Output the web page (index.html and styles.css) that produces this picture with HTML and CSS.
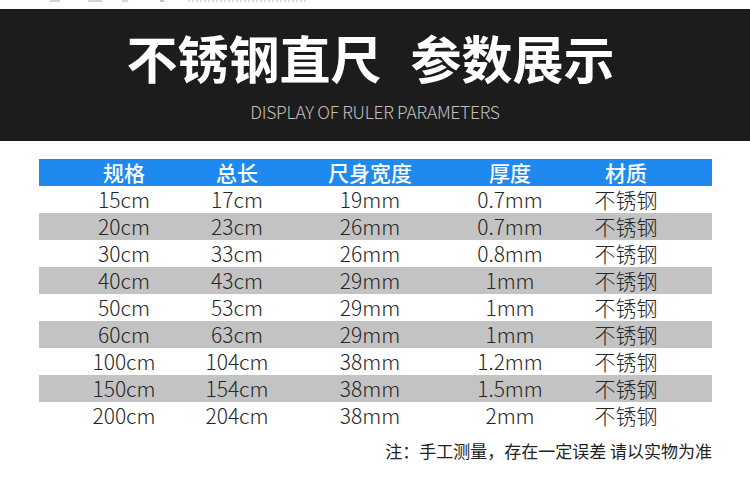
FILE: index.html
```html
<!DOCTYPE html>
<html lang="zh">
<head>
<meta charset="utf-8">
<title>不锈钢直尺 参数展示</title>
<link rel="stylesheet" href="styles.css">
</head>
<body>
<div class="page">
  <div class="topstrip">
    <span class="mark m1"></span><span class="mark m2"></span><span class="mark m3 red"></span><span class="mark m4"></span><span class="mark m5 dots"></span>
  </div>
  <header class="banner">
    <h1 class="title"><span>不锈钢直尺</span><span>参数展示</span></h1>
    <p class="subtitle">DISPLAY OF RULER PARAMETERS</p>
  </header>
  <section class="table">
    <div class="row head"><span class="c">规格</span><span class="c">总长</span><span class="c">尺身宽度</span><span class="c">厚度</span><span class="c">材质</span></div>
    <div class="row"><span class="c">15cm</span><span class="c">17cm</span><span class="c">19mm</span><span class="c">0.7mm</span><span class="c">不锈钢</span></div>
    <div class="row alt"><span class="c">20cm</span><span class="c">23cm</span><span class="c">26mm</span><span class="c">0.7mm</span><span class="c">不锈钢</span></div>
    <div class="row"><span class="c">30cm</span><span class="c">33cm</span><span class="c">26mm</span><span class="c">0.8mm</span><span class="c">不锈钢</span></div>
    <div class="row alt"><span class="c">40cm</span><span class="c">43cm</span><span class="c">29mm</span><span class="c">1mm</span><span class="c">不锈钢</span></div>
    <div class="row"><span class="c">50cm</span><span class="c">53cm</span><span class="c">29mm</span><span class="c">1mm</span><span class="c">不锈钢</span></div>
    <div class="row alt"><span class="c">60cm</span><span class="c">63cm</span><span class="c">29mm</span><span class="c">1mm</span><span class="c">不锈钢</span></div>
    <div class="row"><span class="c">100cm</span><span class="c">104cm</span><span class="c">38mm</span><span class="c">1.2mm</span><span class="c">不锈钢</span></div>
    <div class="row alt"><span class="c">150cm</span><span class="c">154cm</span><span class="c">38mm</span><span class="c">1.5mm</span><span class="c">不锈钢</span></div>
    <div class="row"><span class="c">200cm</span><span class="c">204cm</span><span class="c">38mm</span><span class="c">2mm</span><span class="c">不锈钢</span></div>
  </section>
  <p class="note">注：手工测量，存在一定误差 请以实物为准</p>
</div>
</body>
</html>
```
FILE: styles.css
```css
* { box-sizing: border-box; }
html, body { margin: 0; padding: 0; background: #ffffff; }
body {
  width: 750px;
  height: 482px;
  overflow: hidden;
  font-family: "Noto Sans CJK SC", "Noto Sans", sans-serif;
  color: #222222;
}
.page { width: 750px; }

.topstrip {
  height: 9px;
  display: flex;
  align-items: flex-start;
  padding-left: 50px;
}
.mark { display: block; height: 2px; background: #d6d6d6; }
.m1 { width: 10px; }
.m2 { width: 14px; margin-left: 28px; }
.m3 { width: 6px; margin-left: 20px; background: #ead0d0; }
.m4 { width: 4px; margin-left: 32px; background: #c4c4c4; }
.m5 { width: 120px; margin-left: 24px; background: repeating-linear-gradient(90deg, #dcdcdc 0 2px, transparent 2px 4px); }

.banner {
  height: 132px;
  background: #1c1c1c;
  padding-top: 18px;
  text-align: center;
}
.title {
  margin: 0;
  display: flex;
  justify-content: center;
  gap: 29px;
  font-size: 51px;
  line-height: 60px;
  font-weight: 700;
  color: #ffffff;
  padding-right: 9px;
}
.subtitle {
  margin: 13px 0 0;
  font-weight: 300;
  font-size: 17.5px;
  line-height: 24px;
  color: #c0c0c0;
  letter-spacing: -0.3px;
}

.table {
  margin: 18px 0 0 39px;
  width: 673px;
}
.row {
  display: grid;
  grid-template-columns: 120px 106px 160px 120px 112px;
  padding-left: 25px;
  height: 27px;
  align-items: center;
  font-size: 21px;
  font-weight: 300;
  line-height: 27px;
  color: #262626;
}
.row.alt { background: #c3c3c3; }
.row.head {
  background: #1e8af0;
  color: #ffffff;
  font-weight: 500;
}
.c { text-align: center; white-space: nowrap; }

.note {
  margin: 10px 38px 0 0;
  text-align: right;
  font-size: 17px;
  line-height: 24px;
  font-weight: 400;
  color: #222222;
}
```
